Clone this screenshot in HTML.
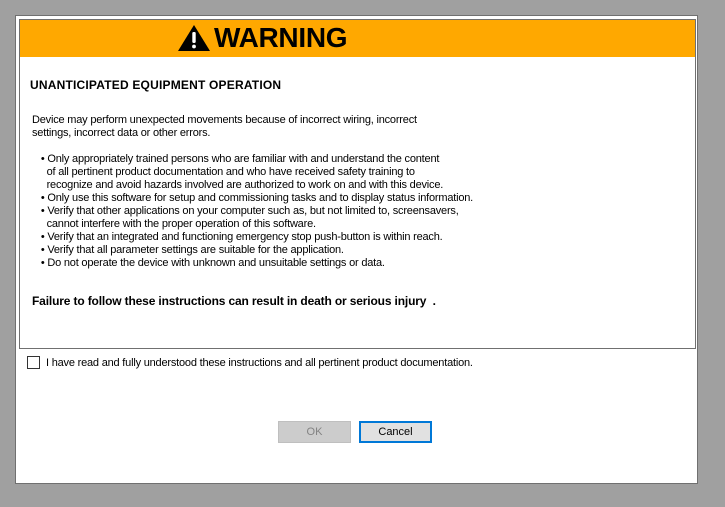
<html><head><style>
body{margin:0;width:725px;height:507px;background:#a0a0a0;position:relative;overflow:hidden;font-family:"Liberation Sans",Arial,sans-serif;color:#000}
.dlg{position:absolute;left:15px;top:15px;width:683px;height:469px;background:#fff;border:1px solid #707070;box-sizing:border-box}
.box{position:absolute;left:19px;top:19px;width:677px;height:330px;border:1px solid #707070;box-sizing:border-box;background:#fff}
.band{position:absolute;left:20px;top:20px;width:675px;height:37px;background:#ffa800}
.t{position:absolute;white-space:pre;font-size:11px;line-height:13px;letter-spacing:-0.2px}
</style></head><body>
<div class="dlg"></div>
<div class="box"></div>
<div class="band"></div>
<svg style="position:absolute;left:177px;top:24px" width="34" height="28" viewBox="0 0 34 28"><polygon points="17,1 33,27 1,27" fill="#000"/><rect x="15.3" y="8" width="3.4" height="11" rx="1.2" fill="#fff"/><circle cx="17" cy="22.5" r="1.9" fill="#fff"/></svg>
<div style="position:absolute;left:214px;top:22px;font-size:28px;font-weight:bold;line-height:32px;letter-spacing:-0.3px">WARNING</div>
<div class="t" style="left:30px;top:79px;font-size:12px;font-weight:bold;letter-spacing:0.2px">UNANTICIPATED EQUIPMENT OPERATION</div>
<div class="t" style="left:32px;top:114px">Device may perform unexpected movements because of incorrect wiring, incorrect
settings, incorrect data or other errors.</div>
<div class="t" style="left:38px;top:153px"> • Only appropriately trained persons who are familiar with and understand the content
   of all pertinent product documentation and who have received safety training to
   recognize and avoid hazards involved are authorized to work on and with this device.
 • Only use this software for setup and commissioning tasks and to display status information.
 • Verify that other applications on your computer such as, but not limited to, screensavers,
   cannot interfere with the proper operation of this software.
 • Verify that an integrated and functioning emergency stop push-button is within reach.
 • Verify that all parameter settings are suitable for the application.
 • Do not operate the device with unknown and unsuitable settings or data.</div>
<div class="t" style="left:32px;top:295px;font-size:12px;font-weight:bold;letter-spacing:-0.15px">Failure to follow these instructions can result in death or serious injury  .</div>
<div style="position:absolute;left:27px;top:356px;width:13px;height:13px;border:1px solid #333;box-sizing:border-box"></div>
<div class="t" style="left:46px;top:357px">I have read and fully understood these instructions and all pertinent product documentation.</div>
<div style="position:absolute;left:278px;top:421px;width:73px;height:22px;background:#ccc;border:1px solid #bfbfbf;box-sizing:border-box;color:#838383;font-size:11px;text-align:center;line-height:20px">OK</div>
<div style="position:absolute;left:359px;top:421px;width:73px;height:22px;background:#e1e1e1;border:2px solid #0078d7;box-sizing:border-box;font-size:11px;text-align:center;line-height:18px">Cancel</div>
</body></html>
